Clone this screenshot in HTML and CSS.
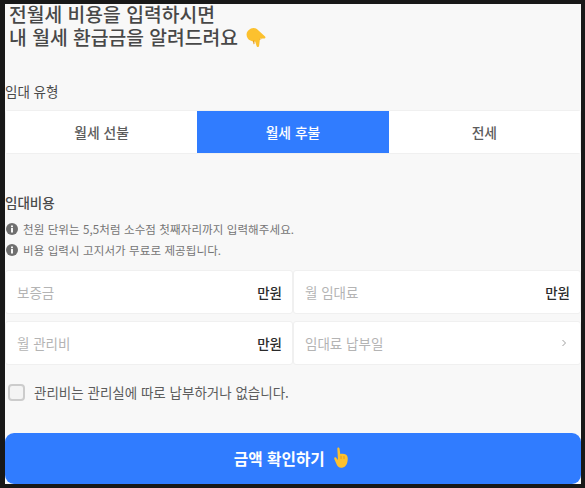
FILE: index.html
```html
<!doctype html>
<html lang="ko">
<head>
    <meta charset="utf-8">
    <meta name="viewport" content="width=device-width, initial-scale=1">
    <title>월세 환급금 계산</title>
    <link rel="stylesheet" href="styles.css">
</head>
<body>

<main class="page">
    <!-- 제목 -->
    <h1 class="title">
        <span class="title-line">전월세 비용을 입력하시면</span>
        <span class="title-line">내 월세 환급금을 알려드려요
            <svg class="emoji-down" viewBox="0 0 20 20" aria-hidden="true">
                <path fill="#fcc12e" d="M.6 6C1 3 4 .3 7.500.1c2.200-.1 3.500 1 5 2.300l6.300 5.800c1.200 1.100.6 2.500-1 2.400l-3.800-.1-.9 7.300c-.2 1.600-2.300 1.600-2.600 0L9.200 13.500c-1.400.3-3.300 0-4.700-.9C2 11.300.3 8.800.6 6z"/>
                <path fill="#e59a1c" d="M6.800 12.800l.7 3c.2.800 1 .6 1-.2l-.2-3zM13.600 10.800l3 0-3.300 1z"/>
            </svg>
        </span>
    </h1>

    <!-- 임대 유형 -->
    <h2 class="label label-type">임대 유형</h2>
    <div class="tabs">
        <button class="tab" type="button">월세 선불</button>
        <button class="tab tab-active" type="button">월세 후불</button>
        <button class="tab" type="button">전세</button>
    </div>

    <!-- 임대비용 -->
    <h2 class="label label-cost">임대비용</h2>
    <ul class="notes">
        <li class="note">
            <svg class="note-icon" viewBox="0 0 12 12" aria-hidden="true">
                <circle cx="6" cy="6" r="6" fill="#6f6f6f"/>
                <rect x="5" y="5" width="2" height="4.500" fill="#f8f8f8"/>
                <rect x="5" y="2.500" width="2" height="1.700" fill="#f8f8f8"/>
            </svg>
            천원 단위는 5,5처럼 소수점 첫째자리까지 입력해주세요.
        </li>
        <li class="note">
            <svg class="note-icon" viewBox="0 0 12 12" aria-hidden="true">
                <circle cx="6" cy="6" r="6" fill="#6f6f6f"/>
                <rect x="5" y="5" width="2" height="4.500" fill="#f8f8f8"/>
                <rect x="5" y="2.500" width="2" height="1.700" fill="#f8f8f8"/>
            </svg>
            비용 입력시 고지서가 무료로 제공됩니다.
        </li>
    </ul>

    <div class="fields">
        <div class="field"><span class="field-name">보증금</span><span class="field-unit">만원</span></div>
        <div class="field"><span class="field-name">월 임대료</span><span class="field-unit">만원</span></div>
        <div class="field"><span class="field-name">월 관리비</span><span class="field-unit">만원</span></div>
        <div class="field">
            <span class="field-name">임대료 납부일</span>
            <svg class="chevron" viewBox="0 0 6 8" aria-hidden="true">
                <path fill="none" stroke="#a0a0a0" stroke-width="1" d="M1.500 1l3 3-3 3"/>
            </svg>
        </div>
    </div>

    <label class="check">
        <input class="check-input" type="checkbox">
        관리비는 관리실에 따로 납부하거나 없습니다.
    </label>

    <button class="submit" type="button">
        금액 확인하기
        <svg class="emoji-up" viewBox="0 0 14 21" aria-hidden="true">
            <path fill="#fcc12e" d="M3.300 1.500C3.400 0 5.300 0 5.500 1.500L6.300 7c1.800-.5 4-.4 5.500.5 1.700 1 2.100 3 1.900 5.300-.3 3.500-1.500 7.400-5.500 7.900-3 .4-4.700-1-5.500-3.200L.3 12c-.5-1.300 1-2.200 1.900-1.200L4 13z"/>
            <path fill="#e59a1c" d="M6.500 9c.5-.4 1-.2 1 .4v2.600l-.9.1zM9.500 9.300c.5-.4 1-.2 1 .4v2.300l-.9.1z"/>
        </svg>
    </button>
</main>

</body>
</html>
```

FILE: styles.css
```css
*, *::before, *::after {
    box-sizing: border-box;
}

:root {
    --frame: #181818;
    --page-bg: #f8f8f8;
    --line: #f0f0f0;
    --blue: #307cff;
}

html, body {
    height: 100%;
}

body {
    margin: 0;
    background: var(--frame);
    font-family: "Noto Sans CJK KR", "Noto Sans", sans-serif;
    overflow: hidden;
}

.page {
    margin: 4px 4px 0 5px;
    height: 480px;
    background: var(--page-bg);
    overflow: hidden;
    display: flex;
    flex-direction: column;
}

.title {
    margin: 0;
    padding-left: 4px;
    font-size: 19.3px;
    line-height: 23px;
    font-weight: 500;
    color: #484848;
}

.title-line {
    display: block;
}

.title-line:first-child {
    margin-top: -1px;
}

.emoji-down {
    width: 20px;
    height: 20px;
    margin-left: 3px;
    vertical-align: -3px;
}

.label {
    margin: 0;
    font-size: 13.5px;
    line-height: 18px;
    font-weight: 400;
    color: #4a4a4a;
}

.label-type {
    margin-top: 33px;
}

.tabs {
    display: grid;
    grid-template-columns: repeat(3, 1fr);
    height: 44px;
    margin-top: 10px;
    border: 1px solid var(--line);
    border-radius: 3px;
    background: #fff;
}

.tab {
    border: 0;
    padding: 0;
    background: #fff;
    color: #5c5c5c;
    font: 500 13.8px "Noto Sans CJK KR", sans-serif;
}

.tab-active {
    background: var(--blue);
    color: #fff;
}

.label-cost {
    margin-top: 39px;
    font-weight: 500;
}

.notes {
    list-style: none;
    margin: 9px 0 0;
    padding: 0 0 0 1px;
    display: flex;
    flex-direction: column;
    gap: 3px;
}

.note {
    display: flex;
    align-items: center;
    gap: 5px;
    height: 18px;
    font-size: 11.5px;
    color: #757575;
    letter-spacing: 0.1px;
}

.note-icon {
    width: 12px;
    height: 12px;
}

.fields {
    display: grid;
    grid-template-columns: 288px 1fr;
    gap: 7px 0;
    margin-top: 11px;
}

.field {
    display: flex;
    align-items: center;
    justify-content: space-between;
    height: 44px;
    padding: 0 10px 0 11px;
    background: #fff;
    border: 1px solid var(--line);
    border-radius: 3px;
    font-size: 13.5px;
}

.field-name {
    color: #b4b4b4;
}

.field-unit {
    color: #2a2a2a;
    font-weight: 500;
}

.chevron {
    width: 6px;
    height: 8px;
    margin-right: 3px;
}

.check {
    display: flex;
    align-items: center;
    gap: 9px;
    margin: 18px 0 0 3px;
    font-size: 13.5px;
    line-height: 18px;
    color: #5c5c5c;
}

.check-input {
    appearance: none;
    width: 17px;
    height: 17px;
    margin: 0;
    background: #f4f4f4;
    border: 2px solid #ccc;
    border-radius: 4px;
}

.submit {
    margin-top: 32px;
    height: 51px;
    padding: 0 4px 0 0;
    border: 0;
    border-radius: 9px;
    background: var(--blue);
    color: #fff;
    font: 700 15.7px "Noto Sans CJK KR", sans-serif;
}

.emoji-up {
    width: 14px;
    height: 21px;
    margin-left: 5px;
    vertical-align: -3px;
}
```
